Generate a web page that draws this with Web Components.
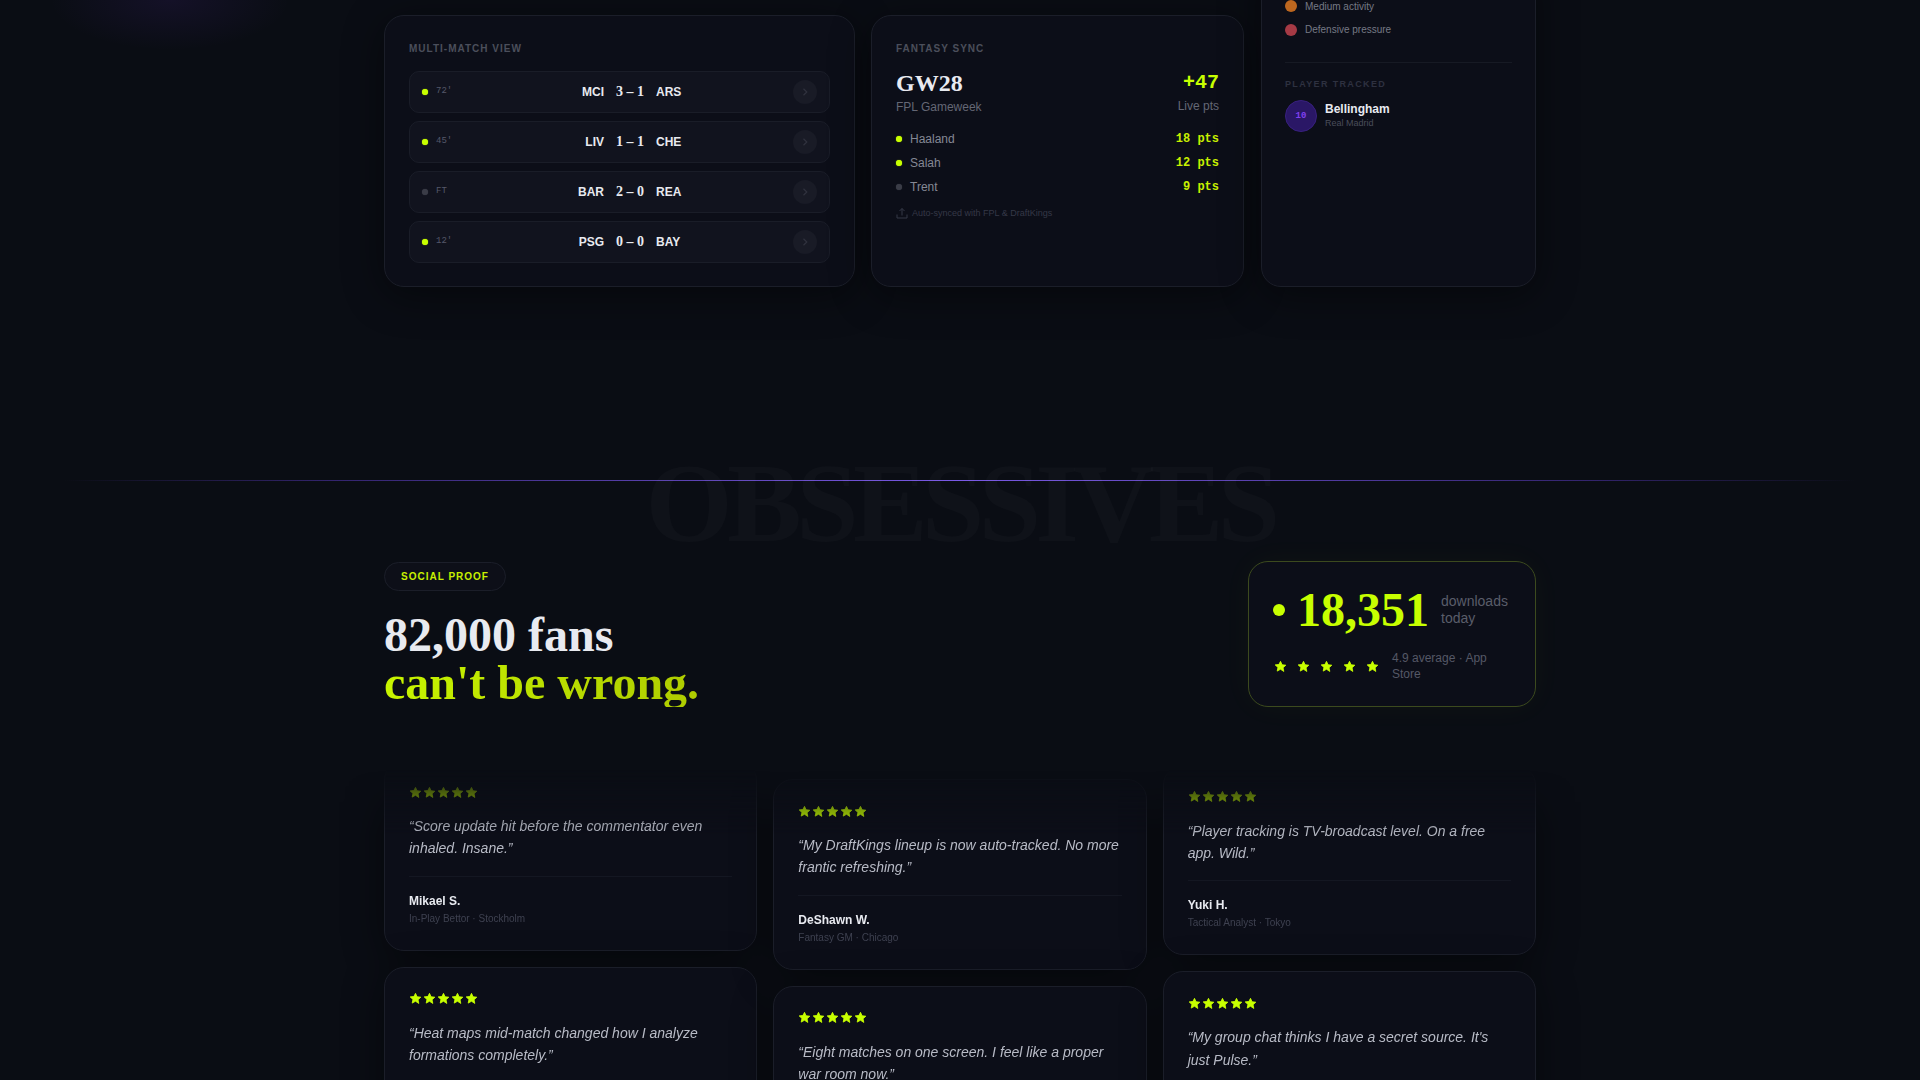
<!DOCTYPE html>
<html lang="en">
<head>
<meta charset="utf-8">
<title>Pulse</title>
<style>
  html, body { margin: 0; height: 1080px; overflow: hidden; }
  body {
    background-color: #0a0d14;
    background-image: radial-gradient(ellipse 120px 50px at 170px 0, rgba(124, 58, 237, .09), transparent);
    font-family: "Liberation Sans", Arial, sans-serif;
  }
</style>
</head>
<body>
<pulse-page>
  <match-card slot="match">
    <match-row minute="72'" home="MCI" score="3 – 1" away="ARS" live></match-row>
    <match-row minute="45'" home="LIV" score="1 – 1" away="CHE" live></match-row>
    <match-row minute="FT" home="BAR" score="2 – 0" away="REA"></match-row>
    <match-row minute="12'" home="PSG" score="0 – 0" away="BAY" live></match-row>
  </match-card>
  <fantasy-card slot="fantasy">
    <fantasy-row name="Haaland" pts="18 pts" live></fantasy-row>
    <fantasy-row name="Salah" pts="12 pts" live></fantasy-row>
    <fantasy-row name="Trent" pts="9 pts"></fantasy-row>
  </fantasy-card>
  <tracker-card slot="tracker"></tracker-card>

  <downloads-card slot="downloads"></downloads-card>

  <quote-card slot="col1" name="Mikael S." role="In-Play Bettor · Stockholm">“Score update hit before the commentator even inhaled. Insane.”</quote-card>
  <quote-card slot="col1">“Heat maps mid-match changed how I analyze formations completely.”</quote-card>
  <quote-card slot="col2" name="DeShawn W." role="Fantasy GM · Chicago">“My DraftKings lineup is now auto-tracked. No more frantic refreshing.”</quote-card>
  <quote-card slot="col2">“Eight matches on one screen. I feel like a proper war room now.”</quote-card>
  <quote-card slot="col3" name="Yuki H." role="Tactical Analyst · Tokyo">“Player tracking is TV-broadcast level. On a free app. Wild.”</quote-card>
  <quote-card slot="col3">“My group chat thinks I have a secret source. It's just Pulse.”</quote-card>
</pulse-page>

<script>
  (function pulse(customElements) {
    'use strict';

    const CARD = `
      background: #0c0e18;
      border: 1px solid #1b1e29;
      border-radius: 20px;
      box-shadow: 0 8px 40px rgba(0, 0, 0, .45);
      box-sizing: border-box;
    `;
    const LABEL = `
      font-size: 10px;
      font-weight: 700;
      letter-spacing: .1em;
      line-height: 15px;
      padding-top: 1px;
      text-transform: uppercase;
    `;

    class ShadowElement extends HTMLElement {
      constructor() {
        super();
        this.attachShadow({mode: 'open'});
      }

      attr(name) {
        return this.getAttribute(name) || '';
      }
    }

    class PulsePage extends ShadowElement {
      connectedCallback() {
        this.shadowRoot.innerHTML = `
          <style>
            :host { display: block; margin-top: -40px; position: relative; }
            .wrap { margin: 0 auto; width: 1152px; }
            .bento {
              display: grid;
              grid-template-columns: 471px 373px 1fr;
              grid-template-rows: 55px 272px;
              column-gap: 16px;
            }
            .bento ::slotted([slot="match"]) { grid-column: 1; grid-row: 2; }
            .bento ::slotted([slot="fantasy"]) { grid-column: 2; grid-row: 2; }
            .bento ::slotted([slot="tracker"]) { grid-column: 3; grid-row: 1 / 3; margin-left: 1px; }
            .rule {
              background: linear-gradient(90deg, transparent, #33246e 15%, #7a5ae6 50%, #33246e 85%, transparent);
              height: 1px;
              margin: 193px 64px 0;
              position: relative;
            }
            .watermark {
              color: rgba(255, 255, 255, .022);
              font: 700 112px/1 "Liberation Serif", "Times New Roman", serif;
              left: 50%;
              letter-spacing: -.05em;
              position: absolute;
              top: -33px;
              transform: translateX(-50%);
              white-space: nowrap;
            }
            .social {
              align-items: flex-start;
              display: flex;
              justify-content: space-between;
              margin-top: 80px;
            }
            .badge {
              background: #0d0f18;
              border: 1px solid #1b1e29;
              border-radius: 999px;
              box-sizing: border-box;
              color: #c8f000;
              display: inline-block;
              font-size: 10px;
              font-weight: 700;
              height: 29px;
              letter-spacing: .1em;
              line-height: 27px;
              margin-top: 1px;
              padding: 0 16px;
            }
            h2 {
              color: #e8eaf0;
              font: 700 48px/48px "Liberation Serif", "Times New Roman", serif;
              margin: 20px 0 0;
            }
            h2 span {
              background: linear-gradient(90deg, #c8f500, #aecb00);
              -webkit-background-clip: text;
              background-clip: text;
              color: transparent;
              display: inline-block;
            }
            .fade {
              -webkit-mask-image: linear-gradient(to bottom, transparent 10px, #000 75px);
              mask-image: linear-gradient(to bottom, transparent 10px, #000 75px);
              margin: 53px -48px 0;
              padding: 0 48px;
            }
            .quotes {
              display: grid;
              gap: 16px;
              grid-template-columns: repeat(3, 1fr);
            }
            .col { display: flex; flex-direction: column; gap: 16px; }
            .col.two { padding-top: 19px; }
            .col.three { padding-top: 4.5px; }
          </style>
          <div class="wrap">
            <div class="bento">
              <slot name="match"></slot>
              <slot name="fantasy"></slot>
              <slot name="tracker"></slot>
            </div>
          </div>
          <div class="rule"><div class="watermark">OBSESSIVES</div></div>
          <div class="wrap">
            <div class="social">
              <div>
                <span class="badge">SOCIAL PROOF</span>
                <h2>82,000 fans<br><span>can't be wrong.</span></h2>
              </div>
              <slot name="downloads"></slot>
            </div>
            <div class="fade">
              <div class="quotes">
                <div class="col"><slot name="col1"></slot></div>
                <div class="col two"><slot name="col2"></slot></div>
                <div class="col three"><slot name="col3"></slot></div>
              </div>
            </div>
          </div>
        `;
      }
    }

    class MatchCard extends ShadowElement {
      connectedCallback() {
        this.shadowRoot.innerHTML = `
          <style>
            :host { display: block; ${CARD} padding: 24px; }
            .label { ${LABEL} color: #4b4e5b; margin-bottom: 15px; }
            .rows { display: flex; flex-direction: column; gap: 8px; }
          </style>
          <div class="label">Multi-match view</div>
          <div class="rows"><slot></slot></div>
        `;
      }
    }

    class MatchRow extends ShadowElement {
      connectedCallback() {
        const live = this.hasAttribute('live');
        const dot = live ? '#c8ff00' : '#3a3c47';
        this.shadowRoot.innerHTML = `
          <style>
            :host {
              align-items: center;
              background: #11131e;
              border: 1px solid #1a1d28;
              border-radius: 10px;
              box-sizing: border-box;
              display: grid;
              grid-template-columns: 45px 1fr 24px;
              height: 42px;
              padding: 0 12px;
            }
            .time { align-items: center; display: flex; gap: 8px; }
            .dot { background: ${dot}; border-radius: 50%; box-shadow: 0 0 1px ${dot}; height: 6px; width: 6px; }
            .min {
              color: #55586a;
              font: 9px/12px "Liberation Mono", "Courier New", monospace;
              position: relative;
              top: -1px;
            }
            .teams {
              align-items: center;
              color: #e8eaf0;
              display: grid;
              font-size: 12px;
              font-weight: 700;
              gap: 12px;
              grid-template-columns: 1fr auto 1fr;
            }
            .home { text-align: right; }
            .score { font: 700 14px/1 "Liberation Serif", "Times New Roman", serif; }
            .go {
              align-items: center;
              background: #191b26;
              border-radius: 50%;
              display: flex;
              height: 24px;
              justify-content: center;
              width: 24px;
            }
          </style>
          <div class="time"><span class="dot"></span><span class="min">${this.attr('minute')}</span></div>
          <div class="teams">
            <span class="home">${this.attr('home')}</span>
            <span class="score">${this.attr('score')}</span>
            <span>${this.attr('away')}</span>
          </div>
          <div class="go">
            <svg width="10" height="10" viewBox="0 0 10 10" fill="none" stroke="#30323e" stroke-width="1.2">
              <path d="M3.5 1.8 6.8 5 3.5 8.2"/>
            </svg>
          </div>
        `;
      }
    }

    class FantasyCard extends ShadowElement {
      connectedCallback() {
        this.shadowRoot.innerHTML = `
          <style>
            :host { display: block; ${CARD} padding: 24px; }
            .label { ${LABEL} color: #4b4e5b; margin-bottom: 13px; }
            .top { align-items: flex-start; display: flex; justify-content: space-between; }
            .gw { color: #e8eaf0; font: 700 24px/28px "Liberation Serif", "Times New Roman", serif; }
            .sub { color: #646775; font-size: 12px; line-height: 16px; margin-top: 2px; }
            .right { padding-top: 2px; text-align: right; }
            .right .sub { margin-top: 3px; }
            .plus { color: #c8ff00; font: 700 20px/24px "Liberation Mono", "Courier New", monospace; }
            .rows { display: flex; flex-direction: column; gap: 8px; margin-top: 16px; }
            .foot {
              align-items: center;
              color: #353847;
              display: flex;
              font-size: 9px;
              gap: 4px;
              margin-top: 12px;
            }
          </style>
          <div class="label">Fantasy Sync</div>
          <div class="top">
            <div><div class="gw">GW28</div><div class="sub">FPL Gameweek</div></div>
            <div class="right"><div class="plus">+47</div><div class="sub">Live pts</div></div>
          </div>
          <div class="rows"><slot></slot></div>
          <div class="foot">
            <svg width="12" height="12" viewBox="0 0 12 12" fill="none" stroke="#353847" stroke-width="1">
              <path d="M1 7.5V11h10V7.5M6 8.5V1.5M3.5 4 6 1.5 8.5 4"/>
            </svg>
            <span>Auto-synced with FPL &amp; DraftKings</span>
          </div>
        `;
      }
    }

    class FantasyRow extends ShadowElement {
      connectedCallback() {
        const dot = this.hasAttribute('live') ? '#c8ff00' : '#3a3c47';
        this.shadowRoot.innerHTML = `
          <style>
            :host {
              align-items: center;
              color: #858895;
              display: flex;
              font-size: 12px;
              height: 16px;
              justify-content: space-between;
            }
            .name { align-items: center; display: flex; gap: 8px; }
            .dot { background: ${dot}; border-radius: 50%; box-shadow: 0 0 1px ${dot}; height: 6px; width: 6px; }
            .pts { color: #c8f000; font: 700 12px/16px "Liberation Mono", "Courier New", monospace; }
          </style>
          <div class="name"><span class="dot"></span>${this.attr('name')}</div>
          <div class="pts">${this.attr('pts')}</div>
        `;
      }
    }

    class TrackerCard extends ShadowElement {
      connectedCallback() {
        this.shadowRoot.innerHTML = `
          <style>
            :host { display: block; ${CARD} padding: 39px 23px 24px; }
            .legend { display: flex; flex-direction: column; gap: 11.5px; }
            .item { align-items: center; color: #767985; display: flex; font-size: 10px; gap: 8px; height: 12px; }
            .swatch { border-radius: 50%; height: 12px; width: 12px; }
            hr { border: 0; border-top: 1px solid #171a24; margin: 26px 0 0; }
            .label { font-size: 9px; font-weight: 700; letter-spacing: .15em; line-height: 15px; color: #2e3140; margin-top: 14px; }
            .player { align-items: center; display: flex; gap: 8px; margin-top: 8px; }
            .avatar {
              align-items: center;
              background: #2a1766;
              border: 1px solid #38207f;
              border-radius: 50%;
              box-sizing: border-box;
              color: #8040f0;
              display: flex;
              font: 700 9px "Liberation Mono", "Courier New", monospace;
              height: 32px;
              justify-content: center;
              width: 32px;
            }
            .who { padding-bottom: 2px; }
            .name { color: #e8eaf0; font-size: 12px; font-weight: 700; line-height: 16px; }
            .club { color: #4a4d5a; font-size: 9px; line-height: 12px; }
          </style>
          <div class="legend">
            <div class="item"><span class="swatch" style="background:#bd671f"></span>Medium activity</div>
            <div class="item"><span class="swatch" style="background:#a63a45"></span>Defensive pressure</div>
          </div>
          <hr>
          <div class="label">PLAYER TRACKED</div>
          <div class="player">
            <div class="avatar">10</div>
            <div class="who"><div class="name">Bellingham</div><div class="club">Real Madrid</div></div>
          </div>
        `;
      }
    }

    class StarRow extends ShadowElement {
      connectedCallback() {
        const size = this.attr('size') || '13';
        const gap = this.attr('gap') || '1';
        const star = `<svg width="${size}" height="${size}" viewBox="0 0 24 24" fill="#c8ff00" stroke="#c8ff00" stroke-width="1.6" stroke-linejoin="round"><path d="M12 2.5l2.9 6.3 6.9.8-5.1 4.7 1.4 6.8L12 17.1l-6.1 3.4 1.4-6.8-5.1-4.7 6.9-.8z"/></svg>`;
        this.shadowRoot.innerHTML = `
          <style>
            :host { align-items: center; display: flex; gap: ${gap}px; height: 14px; }
            svg { display: block; }
          </style>
          ${star.repeat(5)}
        `;
      }
    }

    class DownloadsCard extends ShadowElement {
      connectedCallback() {
        this.shadowRoot.innerHTML = `
          <style>
            :host {
              background: #0c0e18;
              border: 1px solid #3c4a1e;
              border-radius: 20px;
              box-shadow: 0 0 32px rgba(200, 255, 0, .035);
              box-sizing: border-box;
              display: block;
              height: 146px;
              padding: 24px;
              width: 288px;
            }
            .count { align-items: center; display: flex; gap: 12px; }
            .dot { background: #c8ff00; border-radius: 50%; flex: none; height: 12px; width: 12px; }
            .num { color: #c8ff00; font: 700 48px/48px "Liberation Serif", "Times New Roman", serif; }
            .unit { color: #5a5d6a; font-size: 14px; line-height: 17px; }
            .rate { align-items: center; display: flex; gap: 13px; margin-top: 16px; }
            .rate star-row { margin-left: 1px; }
            .text { color: #555866; font-size: 12px; line-height: 16px; }
          </style>
          <div class="count">
            <span class="dot"></span>
            <span class="num">18,351</span>
            <span class="unit">downloads<br>today</span>
          </div>
          <div class="rate">
            <star-row size="13" gap="10"></star-row>
            <span class="text">4.9 average · App Store</span>
          </div>
        `;
      }
    }

    class QuoteCard extends ShadowElement {
      connectedCallback() {
        const author = this.hasAttribute('name') ? `
          <div class="author">
            <div class="name">${this.attr('name')}</div>
            <div class="role">${this.attr('role')}</div>
          </div>` : '';
        this.shadowRoot.innerHTML = `
          <style>
            :host { display: block; ${CARD} min-height: 190px; padding: 24px; }
            p {
              color: #b8bbc6;
              font-size: 14px;
              font-style: italic;
              line-height: 22.4px;
              margin: 16px 0 0;
            }
            .author { border-top: 1px solid #141722; margin-top: 16px; padding-top: 16px; }
            .name { color: #e8eaf0; font-size: 12px; font-weight: 700; line-height: 16px; }
            .role { color: #3e4150; font-size: 10px; line-height: 14px; margin-top: 3px; }
          </style>
          <star-row></star-row>
          <p><slot></slot></p>
          ${author}
        `;
      }
    }

    customElements.define('star-row', StarRow);
    customElements.define('match-row', MatchRow);
    customElements.define('match-card', MatchCard);
    customElements.define('fantasy-row', FantasyRow);
    customElements.define('fantasy-card', FantasyCard);
    customElements.define('tracker-card', TrackerCard);
    customElements.define('downloads-card', DownloadsCard);
    customElements.define('quote-card', QuoteCard);
    customElements.define('pulse-page', PulsePage);
  })(window.customElements);
</script>
</body>
</html>
